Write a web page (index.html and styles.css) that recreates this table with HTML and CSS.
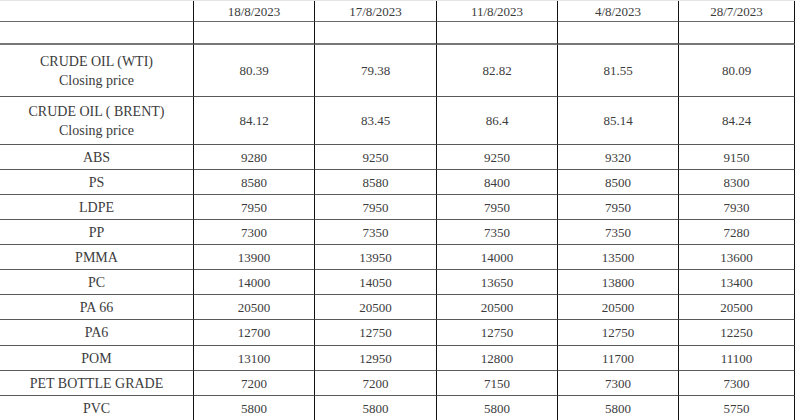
FILE: index.html
```html
<!DOCTYPE html>
<html>
<head>
<meta charset="utf-8">
<link rel="stylesheet" href="styles.css">
</head>
<body>
<table class="prices">
  <colgroup>
    <col class="c-label"><col class="c-a"><col class="c-b"><col class="c-a"><col class="c-a"><col class="c-last">
  </colgroup>
  <tr class="r-head">
    <td></td><td>18/8/2023</td><td>17/8/2023</td><td>11/8/2023</td><td>4/8/2023</td><td>28/7/2023</td>
  </tr>
  <tr class="r-empty">
    <td></td><td></td><td></td><td></td><td></td><td></td>
  </tr>
  <tr class="r-wti">
    <td class="label"><div>CRUDE OIL (WTI)</div><div>Closing price</div></td>
    <td>80.39</td><td>79.38</td><td>82.82</td><td>81.55</td><td>80.09</td>
  </tr>
  <tr class="r-brent">
    <td class="label"><div>CRUDE OIL ( BRENT)</div><div>Closing price</div></td>
    <td>84.12</td><td>83.45</td><td>86.4</td><td>85.14</td><td>84.24</td>
  </tr>
  <tr class="r"><td class="label">ABS</td><td>9280</td><td>9250</td><td>9250</td><td>9320</td><td>9150</td></tr>
  <tr class="r"><td class="label">PS</td><td>8580</td><td>8580</td><td>8400</td><td>8500</td><td>8300</td></tr>
  <tr class="r"><td class="label">LDPE</td><td>7950</td><td>7950</td><td>7950</td><td>7950</td><td>7930</td></tr>
  <tr class="r"><td class="label">PP</td><td>7300</td><td>7350</td><td>7350</td><td>7350</td><td>7280</td></tr>
  <tr class="r"><td class="label">PMMA</td><td>13900</td><td>13950</td><td>14000</td><td>13500</td><td>13600</td></tr>
  <tr class="r"><td class="label">PC</td><td>14000</td><td>14050</td><td>13650</td><td>13800</td><td>13400</td></tr>
  <tr class="r"><td class="label">PA 66</td><td>20500</td><td>20500</td><td>20500</td><td>20500</td><td>20500</td></tr>
  <tr class="r r-tall"><td class="label">PA6</td><td>12700</td><td>12750</td><td>12750</td><td>12750</td><td>12250</td></tr>
  <tr class="r"><td class="label">POM</td><td>13100</td><td>12950</td><td>12800</td><td>11700</td><td>11100</td></tr>
  <tr class="r"><td class="label">PET BOTTLE GRADE</td><td>7200</td><td>7200</td><td>7150</td><td>7300</td><td>7300</td></tr>
  <tr class="r"><td class="label">PVC</td><td>5800</td><td>5800</td><td>5800</td><td>5800</td><td>5750</td></tr>
</table>
</body>
</html>
```

FILE: styles.css
```css
html, body {
  margin: 0;
  padding: 0;
  background: #ffffff;
}

.prices {
  border-collapse: separate;
  border-spacing: 0;
  table-layout: fixed;
  width: 795px;
  font-family: "Liberation Serif", "Times New Roman", serif;
  font-size: 13px;
  color: #3c3c3c;
  border-top: 1px solid #e4e4e4;
}

.c-label { width: 194px; }
.c-a { width: 121px; }
.c-b { width: 122px; }
.c-last { width: 116px; }

.prices td {
  padding: 0;
  text-align: center;
  vertical-align: middle;
  border-right: 1px solid #111;
  border-bottom: 1px solid #5a5a5a;
  box-sizing: border-box;
  line-height: 19px;
}

.prices td.label {
  font-size: 14px;
}

.r-head td { height: 21px; border-bottom-color: #6a6a6a; }
.r-empty td { height: 23px; border-bottom: 2px solid #777; }
.r-wti td { height: 52px; }
.r-brent td { height: 48px; }
.r td { height: 25px; }
.r-tall td { height: 26px; }
```
